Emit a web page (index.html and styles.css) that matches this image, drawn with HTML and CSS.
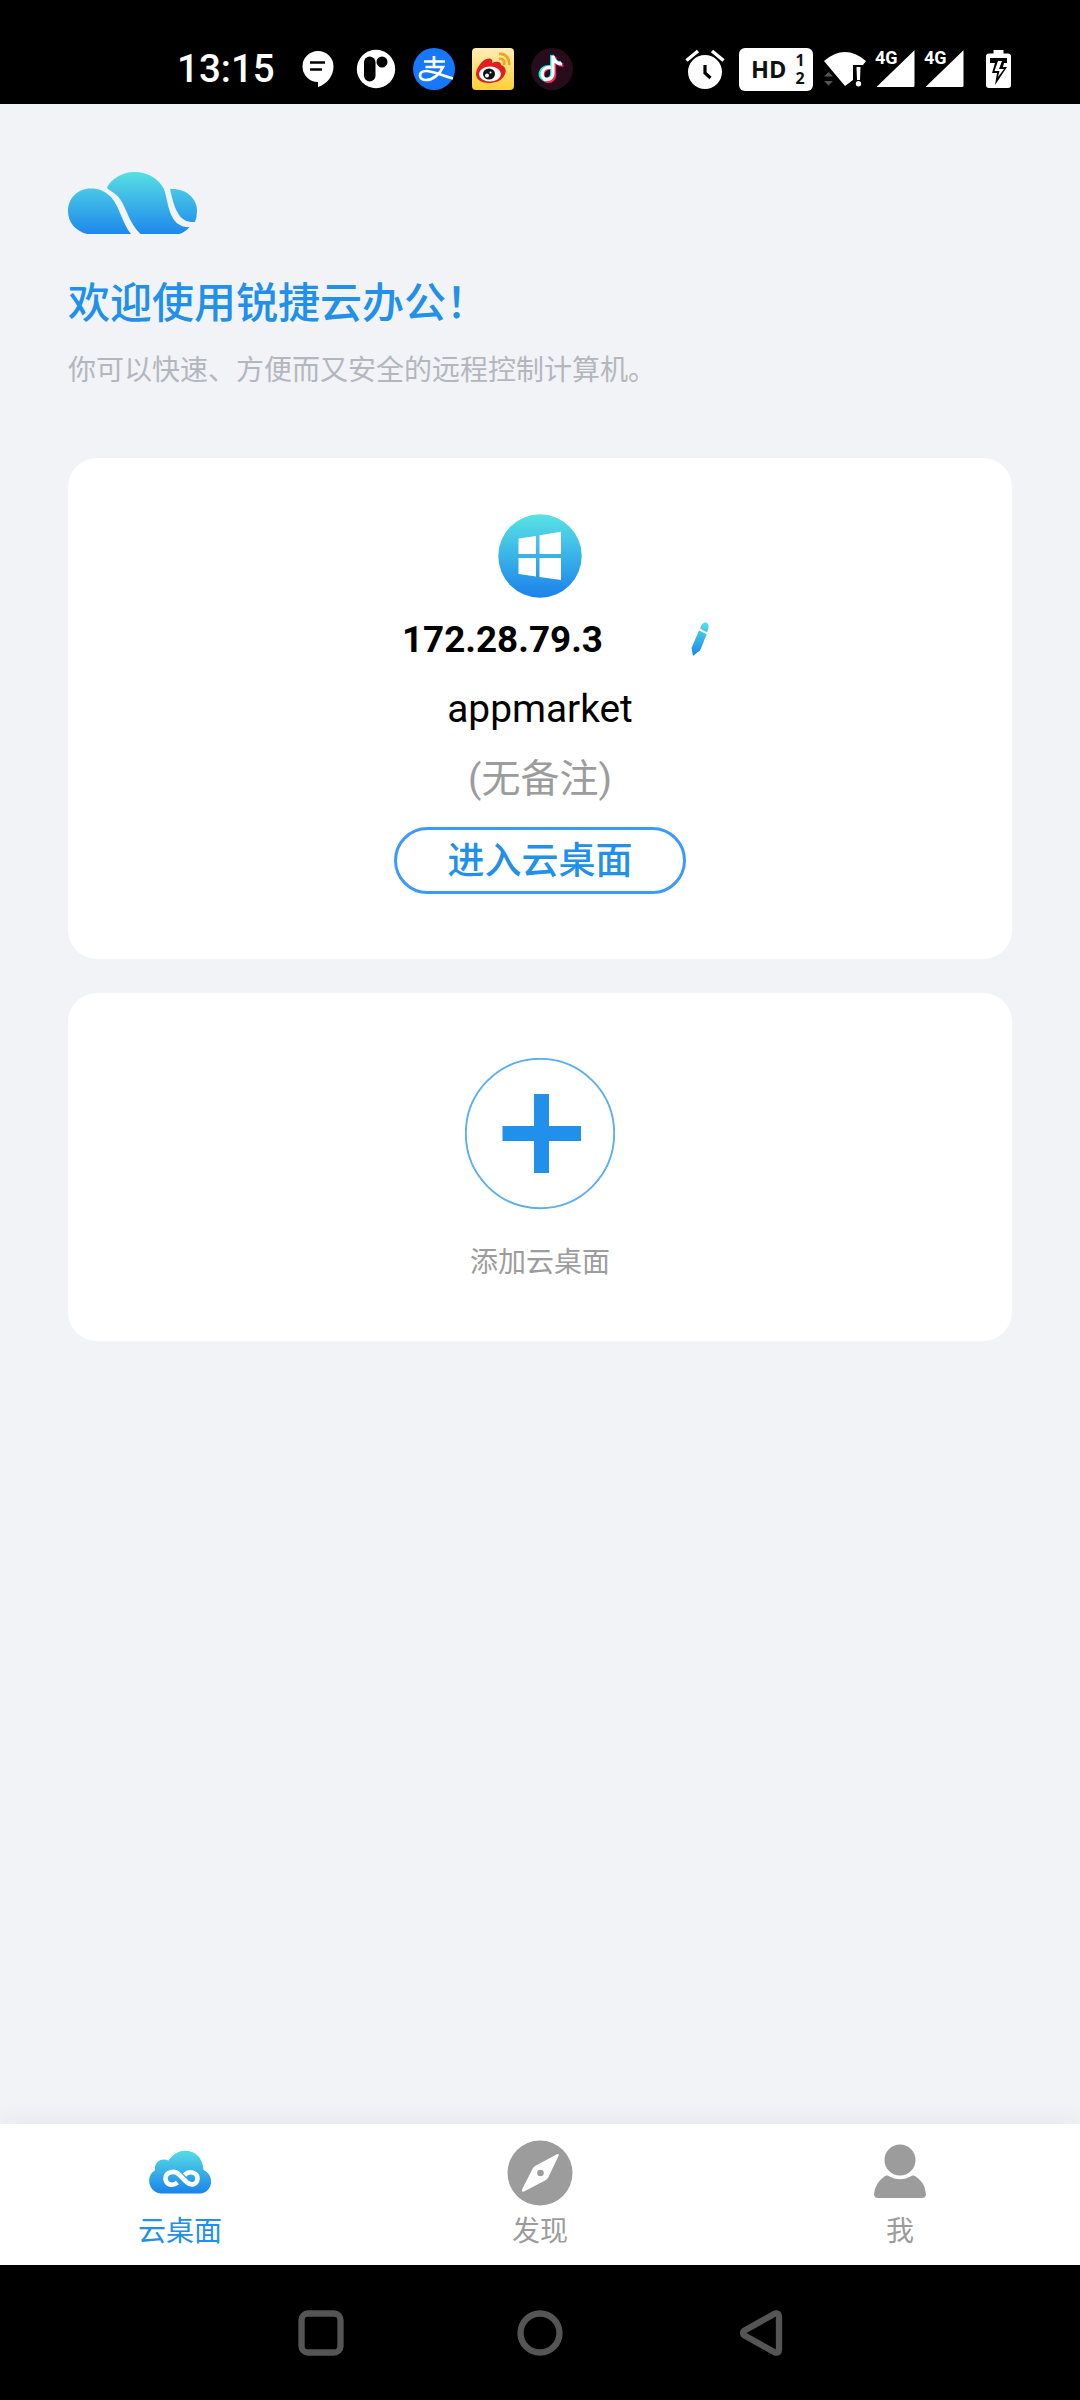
FILE: index.html
```html
<!DOCTYPE html>
<html lang="zh-CN">
<head>
<meta charset="utf-8">
<title>云办公</title>
<link rel="stylesheet" href="styles.css">
</head>
<body>
<div class="screen">
  <header class="status">
    <div class="status-left">
      <span class="clock">13:15</span>
      <svg class="chat" width="32" height="38" viewBox="0 0 32 38"><path d="M16 1a15.500 15.500 0 1 0 0 31v5C25 34 31.500 26 31.500 16.500A15.500 15.500 0 0 0 16 1z" fill="#fff"/><path d="M8 12.500h15M8 19.500h12" stroke="#000" stroke-width="2.600"/></svg>
      <svg width="40" height="40" viewBox="0 0 40 40"><circle cx="20" cy="20" r="19.200" fill="#fff"/><rect x="8" y="7.500" width="11.500" height="25" rx="5.750"/><circle cx="26" cy="13" r="5.500"/></svg>
      <svg width="42" height="42" viewBox="0 0 42 42"><circle cx="21" cy="21" r="21" fill="#1677ff"/><path d="M11 13.500h21M21 8v11M12.500 19H30C27 26 20 32 13 32c-8 0-8-9 0-9 8 0 16 5 27 7.500" fill="none" stroke="#fff" stroke-width="2.700"/></svg>
      <svg width="42" height="42" viewBox="0 0 42 42"><defs><linearGradient id="gold" x2="0" y2="1"><stop stop-color="#ffedb8"/><stop offset="1" stop-color="#ffd033"/></linearGradient></defs><rect width="42" height="42" rx="4" fill="url(#gold)"/><path d="M4 26C4 19 13 8 19 11q2 1 1 4c4-2 9-2 9 2 5 2 6 6 3 11-3 5-9 7-15 7C10 35 4 32 4 26z" fill="#e31c20"/><ellipse cx="18" cy="26" rx="11" ry="7.500" fill="#fff"/><ellipse cx="17" cy="26" rx="6" ry="5.500" fill="#111"/><circle cx="15" cy="27.500" r="2" fill="#fff"/><circle cx="18.500" cy="24.500" r="1" fill="#fff"/><path d="M27 6c7-1 11 5 10 11M27 11c4-1 6 2 5 6" fill="none" stroke="#f9a11b" stroke-width="2.600"/></svg>
      <svg width="42" height="42" viewBox="0 0 42 42"><circle cx="21" cy="21" r="21" fill="#270d1b"/><g fill="none" stroke-width="3.800"><path d="M20 19c-12-1-12 13-4 13 4 0 6-3 6-6V8c1 5 4 8 9 8" stroke="#ff2a55" transform="translate(1.300 1)"/><path d="M19 19c-12-1-12 12.500-4 12.500 4 0 6-3 6-6V7c1 5 4 8 9 8" stroke="#25e5e0"/><path d="M20 19.500c-11-1-11 12-4 12 4 0 6-3 6-6V8c1 5 4 8 9 8" stroke="#fff" stroke-width="3.200"/></g></svg>
    </div>
    <div class="status-right">
      <svg width="40" height="42" viewBox="0 0 40 42"><circle cx="20" cy="24" r="17" fill="#fff"/><path d="M1.500 12.500 13 3M38.500 12.500 27 3" stroke="#fff" stroke-width="3.500"/><path d="M20 17v8l5.500 5" fill="none" stroke="#000" stroke-width="3.200"/></svg>
      <div class="hd"><span>HD</span><span class="sims"><i>1</i><i>2</i></span></div>
      <svg class="wifi" width="42" height="36" viewBox="0 0 42 36"><path d="M0 10Q21-8 42 10l-3 4H29v15l-8 6z" fill="#fff"/><path d="M32.500 16h4l-.5 13h-3z" fill="#fff"/><circle cx="34.500" cy="32.700" r="2.700" fill="#fff"/><path d="M0 25.500 4.500 21 9 25.500zM0 30h9l-4.500 4.500z" fill="#555"/></svg>
      <div class="signal"><svg width="42" height="40" viewBox="0 0 42 40"><path d="M2 37.500 39.500 1.200V36.500q0 1.500-1.500 1.500H4q-3 0-2-.5z" fill="#fff"/></svg><span>4G</span></div>
      <div class="signal signal-two"><svg width="42" height="40" viewBox="0 0 42 40"><path d="M2 37.500 39.500 1.200V36.500q0 1.500-1.500 1.500H4q-3 0-2-.5z" fill="#fff"/></svg><span>4G</span></div>
      <svg width="25" height="38" viewBox="0 0 25 38"><path d="M7.500 0h10v3.500H22q3 0 3 3V35q0 3-3 3H3q-3 0-3-3V6.500q0-3 3-3h4.500z" fill="#fff"/><path d="M4 8h17v5h-3l-1 4h4L9 35l2-12H6l3-10H4z"/><path d="m12 11-3.500 10h5l-1.500 6 6-8h-5l3-8z" fill="#fff"/></svg>
    </div>
  </header>

  <main class="content">
    <svg class="logo" width="129" height="62" viewBox="0 0 129 62"><defs><linearGradient id="sky" gradientUnits="userSpaceOnUse" x1="0" y1="0" x2="0" y2="62"><stop stop-color="#57dfe4"/><stop offset="1" stop-color="#1e88eb"/></linearGradient></defs><g fill="url(#sky)"><path d="M23 16.500C9 16.500 0 27 0 39c0 12 8 20 19 23h44C54 51 52 35 43 25 37 19 31 16.500 23 16.500z"/><path d="M39 15.500C44 6 55 0 66.500 0 80 0 91 7 96 17c5 14 4 38 25.500 38.300Q116 61 111 62H72.500C61 51 59 37 52 27 48 21 40 18 39 15.500z"/><path d="M102 17C118 16 129 26 129 39q0 6-2 11C112 51 107 40 102 17z"/></g></svg>
    <h1>欢迎使用锐捷云办公！</h1>
    <p class="intro">你可以快速、方便而又安全的远程控制计算机。</p>

    <section class="card desktop">
      <svg class="windows" width="84" height="84" viewBox="0 0 84 84"><defs><linearGradient id="disc" x2="0" y2="1"><stop stop-color="#59e3e4"/><stop offset="1" stop-color="#1a82eb"/></linearGradient></defs><circle cx="42" cy="42" r="41.700" fill="url(#disc)"/><path d="M20.500 24.500 38 22v18H20.500zM41.500 21.200 63 17.800V40H41.500zM20.500 44H38v18.500L20.500 60zM41.500 44H63v22l-21.500-3z" fill="#fff"/></svg>
      <div class="address"><strong>172.28.79.3</strong><svg width="18" height="36" viewBox="0 0 18 36"><defs><linearGradient id="pen" gradientUnits="userSpaceOnUse" x1="0" y1="0" x2="0" y2="36"><stop stop-color="#59e3e4"/><stop offset="1" stop-color="#1a82eb"/></linearGradient></defs><path d="M9 7.500C11 2 13 1 15 1.500c3 1 3 4 2 7l-1 3zM8 9.500l7.700 3.700-6.500 16L2 35l-1.500-8z" fill="url(#pen)"/></svg></div>
      <div class="host">appmarket</div>
      <div class="remark">(无备注)</div>
      <button class="enter">进入云桌面</button>
    </section>

    <section class="card add">
      <svg width="150" height="152" viewBox="0 0 150 152"><ellipse cx="75" cy="75.500" rx="74.200" ry="74.700" fill="none" stroke="#58aff1" stroke-width="1.900"/><path d="M69 36h15v32h32v15H84v32H69V83H37.500V68H69z" fill="#2090eb"/></svg>
      <span>添加云桌面</span>
    </section>
  </main>

  <nav class="tabs">
    <a class="tab active"><svg width="64" height="66" viewBox="0 0 64 66"><defs><linearGradient id="cloud" gradientUnits="userSpaceOnUse" x1="0" y1="10" x2="0" y2="54"><stop stop-color="#57dfe4"/><stop offset="1" stop-color="#1a82eb"/></linearGradient></defs><path d="M13 53.500C-1 52-2 35 7 30.500 6 21 14 17.500 20.500 20.500 31 4 55 9 55.500 30 68 36 64 53 52 53.500z" fill="url(#cloud)"/><path d="M29.500 42.500C24 47 17.500 44 17.500 38.500 17.500 32 26.500 29.500 31.500 35l7 7c5 4.500 11 2 11-3.500 0-6-8-8.500-13-3.500" fill="none" stroke="#fff" stroke-width="4.600"/></svg><span>云桌面</span></a>
    <a class="tab"><svg width="66" height="66" viewBox="0 0 66 66"><circle cx="33" cy="33" r="32.500" fill="#9c9c9c"/><path d="M50.500 14q2 0 1 2L41 38l-2 2-22 11.500q-3 1-2-2l11-21.500 2-2z" fill="#fff"/><circle cx="33.500" cy="33" r="3.300" fill="#9c9c9c"/></svg><span>发现</span></a>
    <a class="tab"><svg width="54" height="66" viewBox="0 0 54 66"><circle cx="27" cy="20" r="15.500" fill="#9c9c9c"/><path d="M12 36q2-1.300 5 .7 10 5 20 0 3-2 5-.7Q52 42 53 54q0 4-4 4H5q-4 0-4-4Q2 43 12 36z" fill="#9c9c9c"/></svg><span>我</span></a>
  </nav>
  <footer class="system">
    <svg width="46" height="46" viewBox="0 0 46 46"><rect x="3.500" y="3.500" width="39" height="39" rx="6.500"/></svg>
    <svg width="46" height="46" viewBox="0 0 46 46"><circle cx="23" cy="23" r="19.500"/></svg>
    <svg class="back" width="46" height="46" viewBox="0 0 46 46"><path d="M4.500 20.500Q1.500 23 4.500 25.500L35 42.500q4 1 4-3v-33q0-4-4-3z"/></svg>
  </footer>
</div>
</body>
</html>
```
FILE: styles.css
```css
* { box-sizing: border-box; }
body { margin: 0; font-family: Roboto, "Noto Sans CJK SC", sans-serif; }
svg { display: block; flex: none; }
.screen { width: 1080px; height: 2400px; display: flex; flex-direction: column; background: #f1f3f7; }

.status { height: 104px; background: #000; color: #fff; display: flex; justify-content: space-between; padding: 34px 69px 0 177px; }
.status-left { height: 70px; display: flex; align-items: center; gap: 17px; }
.clock { width: 108px; font-size: 38.500px; font-weight: 500; line-height: 70px; white-space: nowrap; }
.chat { margin-right: 5px; }
.status-right { height: 70px; display: flex; align-items: center; gap: 11px; }
.hd { width: 74px; height: 43px; margin-left: 3px; border-radius: 6px; background: #fff; color: #111; display: flex; align-items: center; padding-left: 12px; gap: 9px; font: 700 23.500px/43px "Open Sans", sans-serif; }
.sims { display: flex; flex-direction: column; font-size: 16px; line-height: 18px; }
.sims i { height: 18px; font-style: normal; }
.signal { position: relative; margin-left: -2px; }
.signal-two { margin: 0 9px 0 -4px; }
.signal span { position: absolute; left: 0; top: -1px; font-size: 18px; line-height: 20px; font-weight: 700; text-shadow: 0 0 2px #000; }

.content { flex: 1; padding: 68px 68px 0; display: flex; flex-direction: column; }
h1 { margin: 39px 0 0; font-size: 42px; line-height: 62px; font-weight: 500; color: #2090eb; }
.intro { margin: 15px 0 0; font-size: 28px; line-height: 42px; color: #b4b6bd; }
.card { background: #fff; border-radius: 29px; display: flex; flex-direction: column; align-items: center; }
.desktop { height: 501px; margin-top: 66px; padding-top: 56px; }
.address { height: 54px; margin-top: 14px; display: flex; align-items: center; align-self: flex-start; padding-left: 334px; font-size: 36.800px; }
.address strong { width: 289px; font-weight: 700; }
.host { margin-top: 14px; font-size: 38.800px; line-height: 58px; }
.remark { margin-top: 12px; font-size: 39px; line-height: 58px; color: #9c9c9c; }
.enter { width: 292px; height: 67px; margin-top: 19px; padding: 2px 0 0; border: 3px solid #3c99ff; border-radius: 34px; background: #fff; color: #2090eb; font: 500 37px/58px Roboto, "Noto Sans CJK SC", sans-serif; }
.add { height: 348px; margin-top: 34px; padding-top: 65px; font-size: 28px; line-height: 42px; color: #9c9c9c; }
.add span { margin-top: 32px; }

.tabs { height: 141px; display: flex; background: #fff; box-shadow: 0 -2px 22px rgba(60, 65, 90, .08); }
.tab { flex: 1; padding-top: 16px; display: flex; flex-direction: column; align-items: center; font-size: 28px; line-height: 42px; color: #9c9c9c; }
.tab span { margin-top: 5px; }
.active { color: #2090eb; }
.system { height: 135px; background: #000; display: flex; justify-content: space-between; padding: 45px 294px 0 298px; }
.system svg { fill: none; stroke: #555; stroke-width: 6.300; }
.system svg:nth-child(2) { margin-right: 4px; }
```
